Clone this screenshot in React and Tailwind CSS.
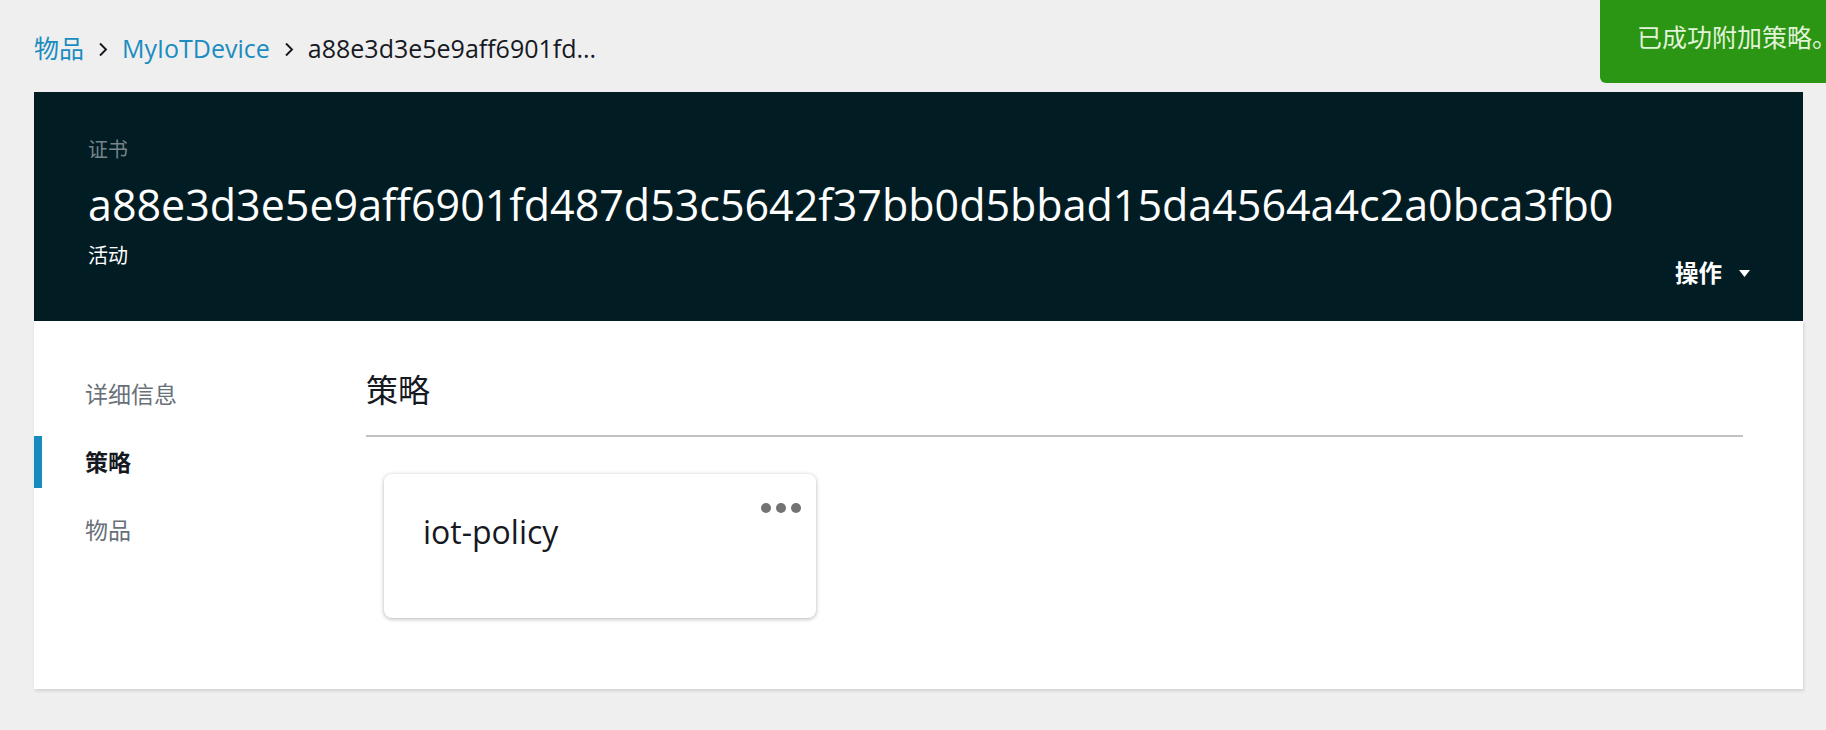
import React from 'react';

const latin = { fontFamily: '"Open Sans", "Noto Sans CJK SC", sans-serif' };

const Chevron = () => (
  <svg className="mx-[14px] h-[15px] w-[10px]" viewBox="0 0 10 15" fill="none">
    <path d="M2 1.5 L8 7.5 L2 13.5" stroke="#16191f" strokeWidth="1.9" />
  </svg>
);

const App = () => {
  const navItems = [
    { id: 'details', label: '详细信息', active: false },
    { id: 'policies', label: '策略', active: true },
    { id: 'things', label: '物品', active: false },
  ];

  return (
    <div className="relative h-[730px] w-full overflow-hidden bg-[#efefef] px-[34px] pr-[23px]" style={latin}>
      {/* Success toast */}
      <div className="absolute right-[-60px] top-0 flex h-[83px] w-[286px] items-center rounded-bl-[6px] bg-[#2b9514] pb-[8px] pl-[37px]">
        <span className="whitespace-nowrap text-[25px] text-[#e2f3da]">已成功附加策略。</span>
      </div>

      {/* Breadcrumb */}
      <div className="flex h-[92px] items-center pt-[6px] text-[25px]">
        <a className="text-[#1a8cc0]">物品</a>
        <Chevron />
        <a className="text-[#1a8cc0]">MyIoTDevice</a>
        <Chevron />
        <span className="text-[#16191f]">a88e3d3e5e9aff6901fd...</span>
      </div>

      {/* Header */}
      <div className="flex h-[229px] items-end justify-between bg-[#021c24] pl-[54px] pr-[53px]">
        <div className="flex flex-col self-start pt-[44px]">
          <span className="text-[20px] leading-[28px] text-[#76858b]">证书</span>
          <span className="mt-[13px] text-[43px] leading-[56px] text-white">
            a88e3d3e5e9aff6901fd487d53c5642f37bb0d5bbad15da4564a4c2a0bca3fb0
          </span>
          <span className="mt-[9px] text-[20px] leading-[28px] text-white">活动</span>
        </div>
        <button className="mb-[30px] flex items-center gap-[17px] text-[23.5px] font-bold text-white">
          操作
          <svg className="h-[7px] w-[11px]" viewBox="0 0 11 7">
            <path d="M0 0 H11 L5.5 7 Z" fill="#ffffff" />
          </svg>
        </button>
      </div>

      {/* Content panel */}
      <div className="flex h-[368px] bg-white shadow-[1px_2px_3px_rgba(0,0,0,0.12)]">
        <nav className="flex w-[332px] shrink-0 flex-col pt-[39px]">
          {navItems.map((item) => (
            <div key={item.id} className="flex h-[68px] items-center">
              <div className={`h-[52px] w-[8px] ${item.active ? 'bg-[#1689bd]' : ''}`} />
              <span
                className={`pl-[43px] text-[23px] ${
                  item.active ? 'font-bold text-[#16191f]' : 'text-[#687078]'
                }`}
              >
                {item.label}
              </span>
            </div>
          ))}
        </nav>

        <div className="flex-1 pr-[60px] pt-[48px]">
          <h2 className="border-b-2 border-[#c2c2c2] pb-[24px] text-[32px] font-normal leading-[42px] text-[#16191f]">策略</h2>
          <div className="pl-[18px] pt-[37px]">
            <div className="relative h-[144px] w-[432px] rounded-[8px] bg-white pl-[39px] pt-[34px] shadow-[0_1px_4px_rgba(0,0,0,0.3)]">
              <span className="text-[32px] leading-[48px] text-[#16191f]">iot-policy</span>
              <div className="absolute right-[15px] top-[29px] flex gap-[5px]">
                <span className="h-[10px] w-[10px] rounded-full bg-[#737373]" />
                <span className="h-[10px] w-[10px] rounded-full bg-[#737373]" />
                <span className="h-[10px] w-[10px] rounded-full bg-[#737373]" />
              </div>
            </div>
          </div>
        </div>
      </div>
    </div>
  );
};

export default App;
